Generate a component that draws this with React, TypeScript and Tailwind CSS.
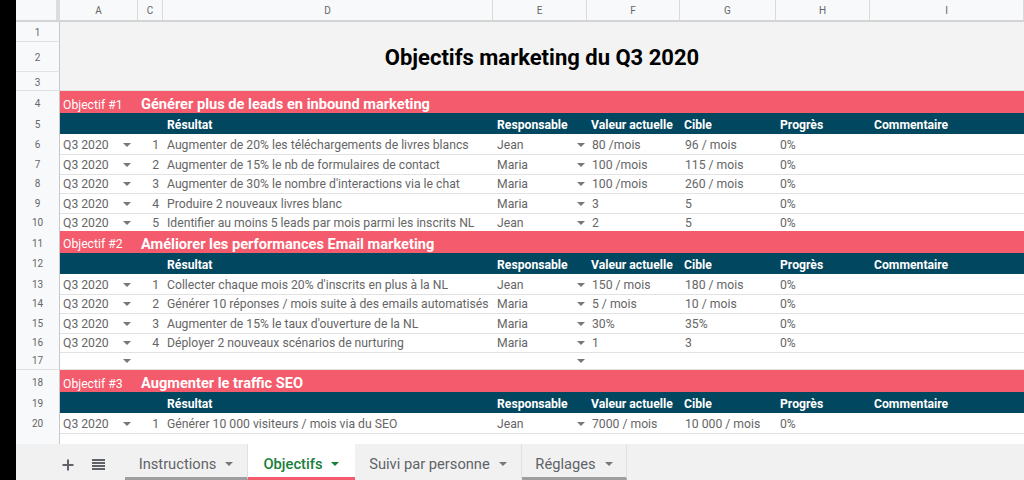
import React from "react";

const COLS = "grid grid-cols-[44px_78px_25px_330px_94px_93px_96px_94px_154px]";
const LETTERS = ["A", "C", "D", "E", "F", "G", "H", "I"];

type Row = { n: number; text: string; who: string; val: string; target: string };

const SECTIONS: { title: string; label: string; start: number; rows: Row[]; empty?: number }[] = [
  {
    label: "Objectif #1",
    title: "Générer plus de leads en inbound marketing",
    start: 4,
    rows: [
      { n: 1, text: "Augmenter de 20% les téléchargements de livres blancs", who: "Jean", val: "80 /mois", target: "96 / mois" },
      { n: 2, text: "Augmenter de 15% le nb de formulaires de contact", who: "Maria", val: "100 /mois", target: "115 / mois" },
      { n: 3, text: "Augmenter de 30% le nombre d'interactions via le chat", who: "Maria", val: "100 /mois", target: "260 / mois" },
      { n: 4, text: "Produire 2 nouveaux livres blanc", who: "Maria", val: "3", target: "5" },
      { n: 5, text: "Identifier au moins 5 leads par mois parmi les inscrits NL", who: "Jean", val: "2", target: "5" },
    ],
  },
  {
    label: "Objectif #2",
    title: "Améliorer les performances Email marketing",
    start: 11,
    empty: 17,
    rows: [
      { n: 1, text: "Collecter chaque mois 20% d'inscrits en plus à la NL", who: "Jean", val: "150 / mois", target: "180 / mois" },
      { n: 2, text: "Générer 10 réponses / mois suite à des emails automatisés", who: "Maria", val: "5 / mois", target: "10 / mois" },
      { n: 3, text: "Augmenter de 15% le taux d'ouverture de la NL", who: "Maria", val: "30%", target: "35%" },
      { n: 4, text: "Déployer 2 nouveaux scénarios de nurturing", who: "Maria", val: "1", target: "3" },
    ],
  },
  {
    label: "Objectif #3",
    title: "Augmenter le traffic SEO",
    start: 18,
    rows: [{ n: 1, text: "Générer 10 000 visiteurs / mois via du SEO", who: "Jean", val: "7000 / mois", target: "10 000 / mois" }],
  },
];

function Arrow() {
  return <span className="inline-block h-0 w-0 border-x-[4px] border-t-[4px] border-x-transparent border-t-[#777]" />;
}

function RowNum({ n }: { n: number | string }) {
  return (
    <div className="flex h-full items-center justify-center border-b border-r border-b-[#e2e2e2] border-r-[#c8c8c8] bg-[#f8f9fa] pt-[2px] text-[10px] font-normal text-[#666]">
      {n}
    </div>
  );
}

function DataRow({ num, r }: { num: number; r?: Row }) {
  const cell = "flex items-center border-b border-[#e2e2e2] pt-[3px]";
  return (
    <div className={`${COLS} h-[19.5px] text-[12.2px] text-[#666]`}>
      <RowNum n={num} />
      <div className={`${cell} justify-between whitespace-nowrap pl-[3px] pr-[7px]`}>
        <span>{r ? "Q3 2020" : ""}</span>
        <Arrow />
      </div>
      <div className={`${cell} justify-end pr-[4px]`}>{r?.n}</div>
      <div className={`${cell} overflow-hidden whitespace-nowrap pl-[4px]`}>{r?.text}</div>
      <div className={`${cell} col-span-2 pl-[4px]`}>
        <span className="w-[80px]">{r?.who}</span>
        <Arrow />
        <span className="pl-[7px]">{r?.val}</span>
      </div>
      <div className={`${cell} pl-[5px]`}>{r?.target}</div>
      <div className={`${cell} pl-[4px]`}>{r ? "0%" : ""}</div>
      <div className="border-b border-[#e2e2e2]" />
    </div>
  );
}

function HeaderRow({ num }: { num: number }) {
  const heads = ["Responsable", "Valeur actuelle", "Cible", "Progrès", "Commentaire"];
  return (
    <div className={`${COLS} h-[20px] text-[12.2px] text-white`}>
      <RowNum n={num} />
      <div className="col-span-2 bg-[#01475f]" />
      <div className="flex items-center bg-[#01475f] pl-[4px] pt-[3px] font-bold">Résultat</div>
      {heads.map((h) => (
        <div key={h} className="flex items-center whitespace-nowrap bg-[#01475f] pl-[4px] pt-[3px] font-bold">
          {h}
        </div>
      ))}
    </div>
  );
}

export default function App() {
  return (
    <div className="flex h-[480px] w-[1024px] overflow-hidden bg-black font-['Roboto',sans-serif]">
      <div className="w-[16px] shrink-0" />
      <div className="flex flex-1 flex-col bg-white">
        {/* column letters */}
        <div className={`${COLS} h-[22px] border-b-2 border-[#d4d4d4] bg-[#f8f9fa] text-[10px] text-[#666]`}>
          <div className="border-r-4 border-[#dcdcdc]" />
          {LETTERS.map((l) => (
            <div key={l} className="flex items-center justify-center border-r border-[#dadada]">
              {l}
            </div>
          ))}
        </div>

        {/* title block */}
        <div className={`${COLS}`}>
          <div className="flex flex-col">
            <div className="h-[20px]"><RowNum n={1} /></div>
            <div className="h-[30px]"><RowNum n={2} /></div>
            <div className="h-[19px]"><RowNum n={3} /></div>
          </div>
          <div className="col-span-8 flex items-center justify-center border-b border-[#e2e2e2] bg-[#f3f3f3] pt-[2px] text-[22px] font-bold text-black">
            Objectifs marketing du Q3 2020
          </div>
        </div>

        {SECTIONS.map((s) => (
          <React.Fragment key={s.label}>
            <div className={`${COLS} h-[22px] text-white`}>
              <RowNum n={s.start} />
              <div className="col-span-8 flex items-center bg-[#f45b6c] pt-[3px]">
                <span className="w-[81px] pl-[3px] text-[12.2px]">{s.label}</span>
                <span className="text-[14.6px] font-bold">{s.title}</span>
              </div>
            </div>
            <HeaderRow num={s.start + 1} />
            {s.rows.map((r, i) => (
              <DataRow key={i} num={s.start + 2 + i} r={r} />
            ))}
            {s.empty ? <DataRow num={s.empty} /> : null}
          </React.Fragment>
        ))}

        {/* partial row 21 */}
        <div className={`${COLS} h-[12px]`}>
          <div className="border-r border-[#c8c8c8] bg-[#f8f9fa]" />
          <div className="col-span-8" />
        </div>

        {/* sheet tabs */}
        <div className="flex flex-1 items-stretch bg-[#f1f1f1] text-[14.7px]">
          <div className="flex w-[109px] items-center justify-end gap-[18px] pr-[20px] pt-[6px] text-[#5f6368]">
            <svg width="12" height="12" viewBox="0 0 12 12"><path d="M6 0.5v11M0.5 6h11" stroke="#5f6368" strokeWidth="2" /></svg>
            <svg width="13" height="12" viewBox="0 0 13 12">
              {[1, 4, 7, 10].map((y) => (
                <rect key={y} x="0" y={y - 1} width="13" height="2" fill="#5f6368" />
              ))}
            </svg>
          </div>
          <Tab label="Instructions" w="w-[123px]" line="border-b-[#9e9e9e]" />
          <div className="flex w-[107px] items-center justify-center gap-[9px] border-b-[3px] border-b-[#f45b6c] bg-white pt-[7px] font-medium text-[#188038]">
            Objectifs
            <span className="inline-block h-0 w-0 border-x-[4px] border-t-[4px] border-x-transparent border-t-[#188038]" />
          </div>
          <Tab label="Suivi par personne" w="w-[167px]" line="border-b-transparent" />
          <Tab label="Réglages" w="w-[105px]" line="border-b-[#9e9e9e]" />
        </div>
      </div>
    </div>
  );
}

function Tab({ label, w, line }: { label: string; w: string; line: string }) {
  return (
    <div className={`flex ${w} items-center justify-center gap-[9px] border-b-[3px] border-r border-r-[#e0e0e0] pt-[7px] ${line} text-[#5f6368]`}>
      {label}
      <Arrow />
    </div>
  );
}
